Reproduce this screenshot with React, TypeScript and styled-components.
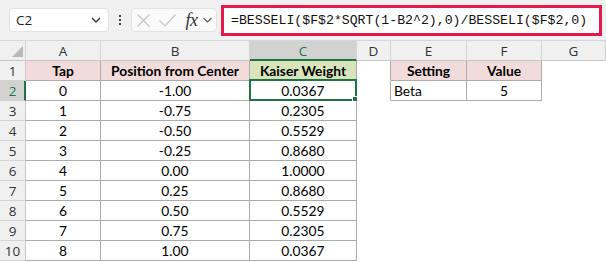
import React from "react";
import styled, { createGlobalStyle, css } from "styled-components";

const GlobalStyle = createGlobalStyle`
  html, body {
    margin: 0;
    padding: 0;
    background: #ffffff;
  }
  body {
    font-family: "Lato", "Liberation Sans", sans-serif;
  }
`;

const GREEN = "#217346";
const TABLE_LINE = "#ababab";
const HEAD_LINE = "#d4d4d4";

const Sheet = styled.div`
  width: 606px;
  height: 262px;
  overflow: hidden;
  background: #ffffff;
`;

/* ---------- formula bar ---------- */

const FormulaBar = styled.div`
  height: 40px;
  display: flex;
  align-items: center;
  padding-left: 9px;
  background: #f0f0f0;
  border-bottom: 1px solid #d6d6d6;
`;

const NameBox = styled.div`
  width: 100px;
  height: 24px;
  box-sizing: border-box;
  display: flex;
  align-items: center;
  justify-content: space-between;
  padding: 0 7px 0 6px;
  background: #ffffff;
  border: 1px solid #e2e2e2;
  border-radius: 4px;
  font-family: "Open Sans", "Noto Sans", sans-serif;
  font-size: 13.5px;
  color: #222;
`;

const Dots = styled.div`
  width: 22px;
  display: flex;
  flex-direction: column;
  align-items: center;
  gap: 2px;
  span {
    width: 2px;
    height: 2px;
    background: #444;
  }
`;

const FxBox = styled.div`
  width: 86px;
  height: 24px;
  box-sizing: border-box;
  display: flex;
  align-items: center;
  padding-left: 5px;
  background: #fafafa;
  border: 1px solid #e2e2e2;
  border-radius: 4px;
`;

const IconSlot = styled.div<{ $w: number; $gap: number }>`
  width: ${(p) => p.$w}px;
  margin-right: ${(p) => p.$gap}px;
  display: flex;
  align-items: center;
  justify-content: center;
`;

const Fx = styled.span`
  font-family: "Liberation Serif", serif;
  font-style: italic;
  font-size: 18px;
  line-height: 1;
  color: #333;
  letter-spacing: -0.5px;
`;

const FormulaInput = styled.div`
  margin-left: 4px;
  width: 381px;
  height: 31px;
  box-sizing: border-box;
  display: flex;
  align-items: center;
  padding-left: 7px;
  background: #ffffff;
  border: 3px solid #e5194c;
  font-family: "Liberation Mono", monospace;
  font-size: 13.2px;
  color: #111;
  white-space: nowrap;
`;

/* ---------- grid ---------- */

const Grid = styled.div`
  display: grid;
  grid-template-columns: 26px 75px 149px 107px 34px 76px 75px 1fr;
  grid-auto-rows: 20px;
`;

const Corner = styled.div`
  background: #f0f0f0;
  border-right: 1px solid ${HEAD_LINE};
  border-bottom: 1px solid #c6c6c6;
  box-sizing: border-box;
  display: flex;
  align-items: flex-end;
  justify-content: flex-end;
  padding: 0 2px 3px 0;
`;

const ColHead = styled.div<{ $sel?: boolean }>`
  box-sizing: border-box;
  display: flex;
  align-items: center;
  justify-content: center;
  background: #f0f0f0;
  border-right: 1px solid ${HEAD_LINE};
  border-bottom: 1px solid #c6c6c6;
  font-family: "Open Sans", "Noto Sans", sans-serif;
  font-size: 13.5px;
  color: #333;
  ${(p) =>
    p.$sel &&
    css`
      background: #d2d2d2;
      color: ${GREEN};
      border-bottom: 2px solid ${GREEN};
      padding-top: 1px;
    `}
`;

const RowHead = styled.div<{ $sel?: boolean }>`
  box-sizing: border-box;
  display: flex;
  align-items: center;
  justify-content: center;
  background: #f0f0f0;
  border-right: 1px solid #c6c6c6;
  border-bottom: 1px solid ${HEAD_LINE};
  font-family: "Open Sans", "Noto Sans", sans-serif;
  font-size: 13.5px;
  color: #333;
  ${(p) =>
    p.$sel &&
    css`
      background: #d2d2d2;
      color: ${GREEN};
      border-right: 2px solid ${GREEN};
      padding-left: 1px;
    `}
`;

type Align = "left" | "center";

const Cell = styled.div<{
  $bg?: string;
  $bold?: boolean;
  $align?: Align;
  $r?: boolean;
  $b?: boolean;
}>`
  position: relative;
  box-sizing: border-box;
  display: flex;
  align-items: center;
  justify-content: ${(p) => (p.$align === "left" ? "flex-start" : "center")};
  padding: 0 3px;
  background: ${(p) => p.$bg || "#ffffff"};
  border-right: 1px solid ${(p) => (p.$r ? TABLE_LINE : "transparent")};
  border-bottom: 1px solid ${(p) => (p.$b ? TABLE_LINE : "transparent")};
  font-size: 13.8px;
  font-weight: ${(p) => (p.$bold ? 700 : 400)};
  color: #000;
  white-space: nowrap;
`;

const Selection = styled.div`
  position: absolute;
  left: -1px;
  top: -2px;
  right: -1px;
  bottom: -1px;
  border: 2px solid ${GREEN};
  pointer-events: none;
`;

const Handle = styled.div`
  position: absolute;
  right: -4px;
  bottom: -4px;
  width: 5px;
  height: 5px;
  background: ${GREEN};
  border: 1px solid #ffffff;
`;

const PINK = "#f2dcdb";
const LIME = "#d8e4bc";

const rows = [
  [0, "-1.00", "0.0367"],
  [1, "-0.75", "0.2305"],
  [2, "-0.50", "0.5529"],
  [3, "-0.25", "0.8680"],
  [4, "0.00", "1.0000"],
  [5, "0.25", "0.8680"],
  [6, "0.50", "0.5529"],
  [7, "0.75", "0.2305"],
  [8, "1.00", "0.0367"],
];

const cols = ["A", "B", "C", "D", "E", "F", "G"];

export default function App() {
  return (
    <>
      <GlobalStyle />
      <Sheet>
        <FormulaBar>
          <NameBox>
            <span>C2</span>
            <svg width="10" height="6" viewBox="0 0 10 6">
              <path d="M1 1 L5 5 L9 1" fill="none" stroke="#333" strokeWidth="1.3" />
            </svg>
          </NameBox>
          <Dots>
            <span />
            <span />
            <span />
          </Dots>
          <FxBox>
            <IconSlot $w={13} $gap={9}>
              <svg width="13" height="13" viewBox="0 0 13 13">
                <path d="M0.5 0.5 L12.5 12.5 M12.5 0.5 L0.5 12.5" stroke="#c4c4c4" strokeWidth="1.2" />
              </svg>
            </IconSlot>
            <IconSlot $w={17} $gap={8}>
              <svg width="17" height="13" viewBox="0 0 17 13">
                <path d="M0.5 6.5 L6 12 L16.5 0.5" fill="none" stroke="#c4c4c4" strokeWidth="1.2" />
              </svg>
            </IconSlot>
            <IconSlot $w={15} $gap={4}>
              <Fx>fx</Fx>
            </IconSlot>
            <IconSlot $w={9} $gap={0}>
              <svg width="9" height="6" viewBox="0 0 9 6">
                <path d="M0.5 1 L4.5 5 L8.5 1" fill="none" stroke="#555" strokeWidth="1.1" />
              </svg>
            </IconSlot>
          </FxBox>
          <FormulaInput>=BESSELI($F$2*SQRT(1-B2^2),0)/BESSELI($F$2,0)</FormulaInput>
        </FormulaBar>

        <Grid>
          <Corner>
            <svg width="11" height="11" viewBox="0 0 11 11">
              <polygon points="11,0 11,11 0,11" fill="#b9b9b9" />
            </svg>
          </Corner>
          {cols.map((c) => (
            <ColHead key={c} $sel={c === "C"}>
              {c}
            </ColHead>
          ))}

          <RowHead>1</RowHead>
          <Cell $bg={PINK} $bold $r $b>Tap</Cell>
          <Cell $bg={PINK} $bold $r $b>Position from Center</Cell>
          <Cell $bg={LIME} $bold $r $b>Kaiser Weight</Cell>
          <Cell $r />
          <Cell $bg={PINK} $bold $r $b>Setting</Cell>
          <Cell $bg={PINK} $bold $r $b>Value</Cell>
          <Cell />

          {rows.map(([tap, pos, w], i) => {
            const n = i + 2;
            return (
              <React.Fragment key={n}>
                <RowHead $sel={n === 2}>{n}</RowHead>
                <Cell $r $b>{tap}</Cell>
                <Cell $r $b>{pos}</Cell>
                <Cell $r $b>
                  {w}
                  {n === 2 && (
                    <Selection>
                      <Handle />
                    </Selection>
                  )}
                </Cell>
                <Cell $r={n === 2} />
                {n === 2 ? (
                  <>
                    <Cell $align="left" $r $b>Beta</Cell>
                    <Cell $r $b>5</Cell>
                  </>
                ) : (
                  <>
                    <Cell />
                    <Cell />
                  </>
                )}
                <Cell />
              </React.Fragment>
            );
          })}
        </Grid>
      </Sheet>
    </>
  );
}
